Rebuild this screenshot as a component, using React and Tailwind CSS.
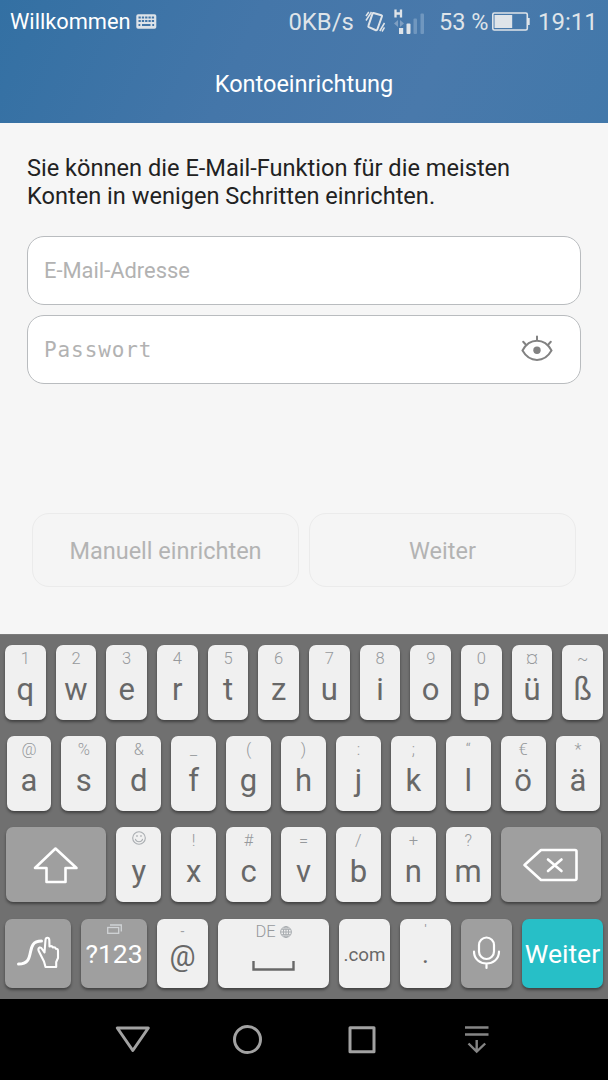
import React, { useState } from 'react';

const topRow = [
  ['1', 'q'], ['2', 'w'], ['3', 'e'], ['4', 'r'], ['5', 't'], ['6', 'z'],
  ['7', 'u'], ['8', 'i'], ['9', 'o'], ['0', 'p'], ['¤', 'ü'], ['~', 'ß'],
];

const homeRow = [
  ['@', 'a'], ['%', 's'], ['&', 'd'], ['_', 'f'], ['(', 'g'], [')', 'h'],
  [':', 'j'], [';', 'k'], ['“', 'l'], ['€', 'ö'], ['*', 'ä'],
];

const bottomRow = [
  ['smile', 'y'], ['!', 'x'], ['#', 'c'], ['=', 'v'], ['/', 'b'], ['+', 'n'], ['?', 'm'],
];

const keyBase = 'rounded-[7px] shadow-[0_2px_3px_rgba(0,0,0,0.42)]';
const lightKey = `${keyBase} bg-[#f0f0f0] text-[#686868]`;
const darkKey = `${keyBase} bg-[#9f9f9f] text-white`;

const SmileIcon = () => (
  <svg width="14" height="14" viewBox="0 0 14 14" fill="none" stroke="#a9adb1" strokeWidth="1.1" strokeLinecap="round">
    <circle cx="7" cy="7" r="6.3" />
    <path d="M3.5 8.3c1 3.2 6 3.2 7 0" />
    <path d="M5 4.6v.6M9 4.6v.6" strokeWidth="1.4" />
  </svg>
);

const LetterKey = ({ hint, letter }) => (
  <button className={`flex h-[75px] min-w-0 flex-1 flex-col items-center ${lightKey}`}>
    <span className="mt-1 flex h-5 justify-center text-[16.5px] leading-5 font-light text-[#96999c]">
      {hint === 'smile' ? <SmileIcon /> : hint}
    </span>
    <span className="mt-[3px] text-[31px] leading-9">{letter}</span>
  </button>
);

const StatusBar = () => (
  <div className="flex h-[43px] items-center pl-[10px] text-[#dfe4e9]">
    <span className="w-[126px] pt-px text-[21.8px] text-white">Willkommen</span>
    <svg width="21" height="15" viewBox="0 0 21 15">
      <rect x=".3" y=".3" width="20" height="14.4" rx="1.8" fill="#dde3e9" />
      <path
        d="M2.5 3.5h15.6M2.5 7h15.6"
        stroke="#4276a8"
        strokeWidth="2"
        strokeDasharray="2.3 1.02"
      />
      <path d="M2.5 11h1.8M6 11h8.5M16.3 11h1.8" stroke="#4276a8" strokeWidth="1.8" />
    </svg>
    <span className="ml-[131.5px] w-[76.5px] pt-[2px] text-[23.8px]">0KB/s</span>
    <svg width="20" height="24" viewBox="0 0 20 24" fill="none" stroke="#dfe4e9" strokeWidth="2">
      <path d="M8.5 3l7.800 2.200q1 .3.600 1.300l-4.600 13q-.4 1-1.400.7l-7-3q-.9-.5-.5-1.400L7.500 3.700q.3-.8 1-.7z" />
      <path d="M1 6l2.800-4M1 10.500L6.500 2M19.500 13l-4.700 8M19.500 17.500l-2.500 4" strokeWidth="1.5" />
    </svg>
    <svg className="ml-[9px]" width="31" height="26" viewBox="0 0 31 26">
      <path d="M1.5 .5v8M7 .5v8M1.5 4.5H7" stroke="#dfe4e9" strokeWidth="2.3" fill="none" />
      <path d="M0 14.5l4-3.5v7zM10 14.5L6 11v7z" fill="#7f9fc2" />
      <rect x="5" y="19" width="4.2" height="6" fill="#dfe4e9" />
      <rect x="12.5" y="14.5" width="4" height="10.5" rx="1" fill="#dfe4e9" />
      <rect x="19.5" y="9.5" width="3.5" height="15.5" rx="1" fill="#7097bf" />
      <rect x="26.5" y="4.5" width="3.5" height="20.5" rx="1" fill="#7097bf" />
    </svg>
    <span className="ml-[14px] w-[53px] pt-[2px] text-[23.5px] whitespace-nowrap">53 %</span>
    <svg width="38" height="20" viewBox="0 0 38 20">
      <rect x=".8" y="1" width="34.5" height="17" rx="1.5" fill="none" stroke="#dfe4e9" strokeWidth="1.6" />
      <rect x="2.5" y="3" width="17.7" height="13" fill="#dfe4e9" />
      <path d="M36.7 6v7" stroke="#dfe4e9" strokeWidth="2" />
    </svg>
    <span className="ml-[8px] pt-px text-[24px]">19:11</span>
  </div>
);

const Header = () => (
  <header className="h-[123px] bg-[linear-gradient(115deg,#3370a3_0%,#4476a9_40%,#4979ab_70%,#4278aa_100%)]">
    <StatusBar />
    <h1 className="h-[80px] text-center text-[23.5px] leading-[82px] text-white">Kontoeinrichtung</h1>
  </header>
);

const EyeIcon = () => (
  <svg width="32" height="28" viewBox="0 0 32 28" fill="none" stroke="#828282" strokeWidth="2" strokeLinecap="round">
    <path d="M1.5 15.5C8.5 2.5 23.5 2.5 30.5 15.5C23.5 28 8.5 28 1.5 15.5z" />
    <circle cx="16" cy="15.2" r="3.7" fill="#828282" stroke="none" />
    <path d="M16 5V1.500M4.700 9.500L2.200 6.800M27.300 9.500l2.500-2.700" />
  </svg>
);

const SetupForm = () => {
  const [email, setEmail] = useState('');
  const [password, setPassword] = useState('');

  return (
    <main className="h-[511px] bg-[#f6f6f6] px-[27px] pt-[31px]">
      <p className="text-[23.6px] leading-7 whitespace-nowrap text-[#222]">
        Sie können die E-Mail-Funktion für die meisten
        <br />
        Konten in wenigen Schritten einrichten.
      </p>
      <div className="mt-[25.5px] flex h-[69px] items-center rounded-[17px] border border-[#b9bcbf] bg-white px-4">
        <input
          className="w-full pt-[3px] text-[21.9px] outline-none placeholder:text-[#b2b2b2]"
          placeholder="E-Mail-Adresse"
          value={email}
          onChange={(e) => setEmail(e.target.value)}
        />
      </div>
      <div className="mt-[10px] flex h-[69px] items-center rounded-[17px] border border-[#b9bcbf] bg-white pr-[27px] pl-4">
        <input
          className="min-w-0 flex-1 pt-1 font-['DejaVu_Sans_Mono',monospace] text-[21px] tracking-[0.9px] outline-none placeholder:text-[#b2b2b2]"
          placeholder="Passwort"
          value={password}
          onChange={(e) => setPassword(e.target.value)}
        />
        <EyeIcon />
      </div>
      <div className="mt-[129.5px] flex gap-[10px] px-[5px] text-[23.5px] text-[#b3b3b3]">
        <button className="h-[74px] flex-1 rounded-[17px] border border-[#ebebeb] bg-[#f5f5f5] pt-[3px]">Manuell einrichten</button>
        <button className="h-[74px] flex-1 rounded-[17px] border border-[#ebebeb] bg-[#f5f5f5] pt-[3px]">Weiter</button>
      </div>
    </main>
  );
};

const Keyboard = () => (
  <section className="flex h-[365px] flex-col gap-[16.2px] border-t border-[#7c7c7c] bg-[#707070] pt-[10px]">
    <div className="flex gap-[10px] px-[5px]">
      {topRow.map(([hint, letter]) => (
        <LetterKey key={letter} hint={hint} letter={letter} />
      ))}
    </div>
    <div className="flex gap-[10px] pr-[7.5px] pl-[6.5px]">
      {homeRow.map(([hint, letter]) => (
        <LetterKey key={letter} hint={hint} letter={letter} />
      ))}
    </div>
    <div className="flex gap-[10px] pr-[7px] pl-[6px]">
      <button className={`flex w-[100.4px] items-center justify-center ${darkKey}`}>
        <svg width="46" height="38" viewBox="0 0 46 38" fill="none" stroke="white" strokeWidth="2.6" strokeLinejoin="round">
          <path d="M22.5 2.5L43.5 22H32.5v14H13.5V22H2z" />
        </svg>
      </button>
      {bottomRow.map(([hint, letter]) => (
        <LetterKey key={letter} hint={hint} letter={letter} />
      ))}
      <button className={`flex w-[100.4px] items-center justify-center ${darkKey}`}>
        <svg width="56" height="34" viewBox="0 0 56 34" fill="none" stroke="white" strokeWidth="2.6" strokeLinejoin="round" strokeLinecap="round">
          <path d="M1.5 17L18 2h34q1.5 0 1.5 1.500v27q0 1.500-1.500 1.500H18z" />
          <path d="M25 11.5l13.5 11.5M38.5 11.5l-13.5 11.5" />
        </svg>
      </button>
    </div>
    <div className="flex h-[69px] gap-[10px] px-[5px]">
      <button className={`flex w-[66px] items-center justify-center ${darkKey}`}>
        <svg width="44" height="34" viewBox="0 0 44 34" fill="none" stroke="white" strokeLinejoin="round" strokeLinecap="round">
          <path d="M2.5 28C21.5 28 7.5 5 25.5 5" strokeWidth="3" />
          <path
            d="M29.5 31l-1.500-5.500L22.700 15q-.9-2.500.7-3.400 1.600-.6 2.700 1.400l2.400 3.500 1-12.500q.2-2.200 1.900-2.200t1.900 2.200l.2 6.500q2.500-1 3.500.9 2.300-.6 3 1.400 2-.1 2 2.200v7l-1.800 4V31z"
            strokeWidth="2.1"
          />
        </svg>
      </button>
      <button className={`flex w-[66px] flex-col items-center ${darkKey}`}>
        <svg className="mt-[5px]" width="15" height="10" viewBox="0 0 15 10" fill="none" stroke="#d0d3d6" strokeWidth="1.3">
          <rect x=".7" y="3.5" width="11" height="5.8" />
          <path d="M3 1h11.300v6.500" />
        </svg>
        <span className="mt-[4px] text-[26.5px] leading-8">?123</span>
      </button>
      <button className={`flex w-[51px] flex-col items-center ${lightKey}`}>
        <span className="mt-[4px] h-4 text-[14px] leading-4 text-[#9fa2a5]">-</span>
        <span className="text-[29px] leading-[34px]">@</span>
      </button>
      <button className={`flex w-[111px] flex-col items-center ${lightKey}`}>
        <span className="mt-[3px] flex h-5 items-center gap-1 text-[16.5px] leading-5 font-light text-[#96999c]">
          DE
          <svg width="12" height="12" viewBox="0 0 12 12" fill="none" stroke="#a9adb1" strokeWidth="1">
            <circle cx="6" cy="6" r="5.4" />
            <ellipse cx="6" cy="6" rx="2.6" ry="5.4" />
            <path d="M6 .6v10.800M.6 6h10.800M1.500 3.300h9M1.500 8.700h9" />
          </svg>
        </span>
        <svg className="mt-[18px]" width="43" height="11" viewBox="0 0 43 11" fill="none" stroke="#686868" strokeWidth="2.4">
          <path d="M1.5 1v8.500h40V1" />
        </svg>
      </button>
      <button className={`w-[51px] pt-[5px] text-[18.8px] ${lightKey}`}>.com</button>
      <button className={`flex w-[51px] flex-col items-center ${lightKey}`}>
        <span className="mt-[5px] h-[14px] text-[12px] leading-3 text-[#8f9295]">'</span>
        <span className="text-[26px] leading-[32px]">.</span>
      </button>
      <button className={`flex w-[51px] items-center justify-center ${darkKey}`}>
        <svg width="28" height="34" viewBox="0 0 28 34" fill="none" stroke="white" strokeWidth="2.2" strokeLinecap="round">
          <rect x="6" y="1.5" width="15" height="21.5" rx="7.5" />
          <path d="M1 15.5c0 16 25 16 25 0M13.5 28V32" />
        </svg>
      </button>
      <button className={`min-w-0 flex-1 bg-[#27bfc7] pt-px text-[26.5px] text-white ${keyBase}`}>Weiter</button>
    </div>
  </section>
);

const NavBar = () => (
  <nav className="flex h-[81px] items-center gap-[79px] bg-black pl-[115px]">
    <svg width="36" height="30" viewBox="0 0 36 30" fill="none" stroke="#a2a2a2" strokeWidth="3" strokeLinejoin="round">
      <path d="M2.3 3h31L17.8 25.5z" />
    </svg>
    <svg width="36" height="30" viewBox="0 0 36 30" fill="none" stroke="#a2a2a2" strokeWidth="3">
      <circle cx="17.5" cy="14.5" r="13" />
    </svg>
    <svg width="36" height="30" viewBox="0 0 36 30" fill="none" stroke="#a2a2a2" strokeWidth="3" strokeLinejoin="round">
      <rect x="5" y="2.8" width="24" height="24" />
    </svg>
    <svg width="36" height="30" viewBox="0 0 36 30" fill="none" stroke="#858585" strokeWidth="2.4">
      <path d="M5 2.5h23.5M5 9.5h23.5" />
      <path d="M16.7 15v12M8.5 18.5l8.200 8 8.500-8" />
    </svg>
  </nav>
);

export default function App() {
  return (
    <div className="h-[1080px] w-[608px] overflow-hidden font-[Roboto,sans-serif]">
      <Header />
      <SetupForm />
      <Keyboard />
      <NavBar />
    </div>
  );
}
